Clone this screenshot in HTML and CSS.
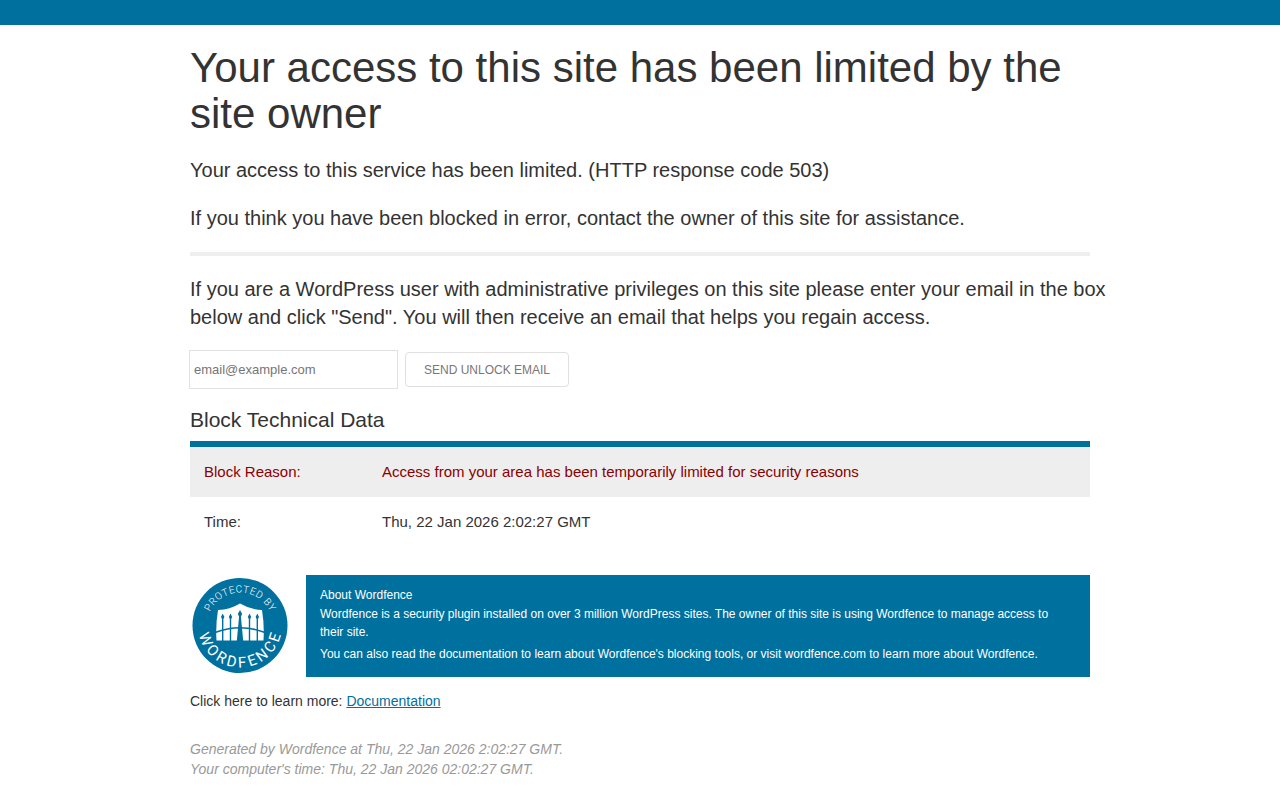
FILE: index.html
```
<!DOCTYPE html>
<html lang="en">
<head>
  <meta charset="UTF-8" />
  <meta name="viewport" content="width=device-width, initial-scale=1.0" />
  <title>Your access to this site has been limited by the site owner</title>
  <link rel="stylesheet" href="styles.css">
</head>
<body>
  <div class="top-bar"></div>

  <main class="container">
    <h1>Your access to this site has been limited by the site owner</h1>
    <p>Your access to this service has been limited. (HTTP response code 503)</p>
    <p>If you think you have been blocked in error, contact the owner of this site for assistance.</p>
    <hr>

    <!-- Unlock form -->
    <p class="unlock-text">If you are a WordPress user with administrative privileges on this site please enter your email in the box below and click "Send". You will then receive an email that helps you regain access.</p>
    <form class="unlock-form">
      <input type="email" name="email" placeholder="email@example.com" aria-label="Email">
      <button type="submit" class="btn">Send Unlock Email</button>
    </form>

    <h2>Block Technical Data</h2>
    <table class="block-data">
      <tr class="reason"><th scope="row">Block Reason:</th><td>Access from your area has been temporarily limited for security reasons</td></tr>
      <tr><th scope="row">Time:</th><td>Thu, 22 Jan 2026 2:02:27 GMT</td></tr>
    </table>

    <!-- About -->
    <div class="about">
      <svg class="badge" viewBox="0 0 100 100" role="img" aria-label="Protected by Wordfence">
        <defs>
          <path id="topArc" d="M17 50.5a33 33 0 0 1 66 0" />
          <path id="bottomArc" d="M9.2 40.5a42 42 0 1 0 81.6 0" />
        </defs>
        <circle cx="50" cy="50.5" r="47.5" fill="#00709e" />
        <text class="badge-top" dx="0 .5 .5 .5 .5 .5 .5 .5 .5 .5 .5 .5"><textPath href="#topArc" startOffset="50%">PROTECTED BY</textPath></text>
        <text class="badge-bottom" dx="0 3 3 3 3 3 3 3 3"><textPath href="#bottomArc" startOffset="50%">WORDFENCE</textPath></text>
        <!-- shield with the gate in front -->
        <path fill="#fff" d="M50 28.500Q60 34.500 72 35Q74.500 50 73.500 65.500H26.500Q25.500 50 28 35Q40 34.500 50 28.500z" />
        <g fill="#00709e">
          <path d="M32 66V44l-1-2 1.700-3.500 1.700 3.500-1 2v22zM39.800 66V44l-1-2 1.700-3.500 1.700 3.500-1 2V66zM58.800 66V44l-1-2 1.700-3.500 1.700 3.500-1 2V66zM66.600 66V44l-1-2 1.700-3.500 1.700 3.500-1 2v22z" />
          <path d="M46.800 66L49.100 41.500l-1.300-2.500L50 35l2.200 4-1.300 2.500L53.200 66z" />
        </g>
        <path fill="none" stroke="#00709e" stroke-width="1.600" d="M25 57.500Q50 48 75 57.500" />
      </svg>
      <div class="about-text">
        <h3>About Wordfence</h3>
        <p>Wordfence is a security plugin installed on over 3 million WordPress sites. The owner of this site is using Wordfence to manage access to their site.</p>
        <p>You can also read the documentation to learn about Wordfence's blocking tools, or visit wordfence.com to learn more about Wordfence.</p>
      </div>
    </div>

    <p class="learn-more">Click here to learn more: <a href="#">Documentation</a></p>

    <p class="generated"><em>Generated by Wordfence at Thu, 22 Jan 2026 2:02:27 GMT.<br>Your computer's time: Thu, 22 Jan 2026 02:02:27 GMT.</em></p>
  </main>
</body>
</html>
```
FILE: styles.css
```
* { box-sizing: border-box; }
body { margin: 0; background: #fff; color: #333; font-family: "Liberation Sans", Arial, sans-serif; font-size: 14px; line-height: 20px; }
a { color: #00709e; }
.top-bar { height: 25px; background: #00709e; }
.container { max-width: 900px; margin: 20px auto 0; }

h1, h2, h3 { margin: 0; font-weight: 400; }
h1 { font-size: 42px; line-height: 46px; margin-bottom: 19px; }
h2 { font-size: 21px; line-height: 24px; margin-bottom: 9px; }
p { margin: 0 0 20px; font-size: 20px; line-height: 28px; }
hr { height: 4px; margin: 20px 0 19px; border: 0; background: #eee; }

/* Unlock form */
.unlock-text { margin-right: -20px; }
.unlock-form { display: flex; align-items: center; gap: 8px; margin-bottom: 20px; }
.unlock-form input {
  width: 207px; height: 37px; padding: 0 4px; border: 0; outline: 0;
  box-shadow: 0 0 0 1px #e2e2e2; color: #333;
  font-family: inherit; font-size: 13px;
}
.unlock-form input::placeholder { color: #757575; }
.btn {
  height: 35px; padding: 0 18px; border: 1px solid #e0e0e0; border-radius: 4px;
  background: #fff; color: #777; font-family: inherit; font-size: 12px;
  text-transform: uppercase; cursor: pointer;
}

.block-data { width: 100%; border-spacing: 0; border-top: 6px solid #00709e; font-size: 15px; }
.block-data th, .block-data td { height: 50px; padding: 0 14px; text-align: left; font-weight: 400; }
.block-data th { width: 178px; }
.block-data .reason { background: #eee; color: #8b0000; }

/* About */
.about { display: flex; gap: 16px; margin: 28px 0 14px; }
.badge { flex: none; width: 100px; height: 100px; }
.badge text { fill: #fff; font-family: Roboto, sans-serif; text-anchor: middle; }
.badge-top { font-size: 10px; font-weight: 300; }
.badge-bottom { font-size: 15px; }
.about-text { flex: 1; padding: 11px 20px 14px 14px; background: #00709e; color: #fff; font-size: 12px; line-height: 18px; }
.about-text h3 { font-size: 12px; line-height: 18px; margin-bottom: 1px; }
.about-text p { font-size: 12px; line-height: 18px; margin: 0 0 4px; }
.about-text p:last-child { margin-bottom: 0; }

.learn-more { font-size: 14px; line-height: 20px; margin-bottom: 28px; }
.generated { font-size: 14px; line-height: 20px; color: #999; }
```
